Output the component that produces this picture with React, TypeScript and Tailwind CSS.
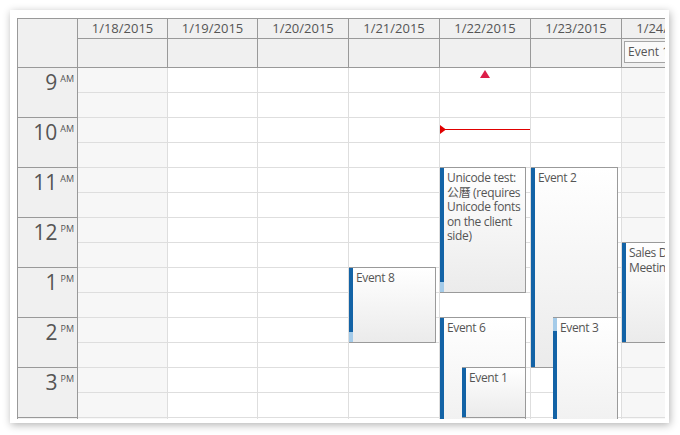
import * as React from 'react';

interface DayCol {
  label: string;
  width: string;
  weekend?: boolean;
}

interface CalEvent {
  col: number;
  text: string;
  start: number; // minutes from midnight
  end: number;
  barStart?: number;
  barEnd?: number;
  left: number;
  width: number;
}

const DAYS: DayCol[] = [
  { label: '1/18/2015', width: 'w-[90px]', weekend: true },
  { label: '1/19/2015', width: 'w-[90px]' },
  { label: '1/20/2015', width: 'w-[91px]' },
  { label: '1/21/2015', width: 'w-[91px]' },
  { label: '1/22/2015', width: 'w-[91px]' },
  { label: '1/23/2015', width: 'w-[91px]' },
  { label: '1/24/2015', width: 'w-[91px]', weekend: true },
];

const HOURS = [
  { n: '9', s: 'AM' },
  { n: '10', s: 'AM' },
  { n: '11', s: 'AM' },
  { n: '12', s: 'PM' },
  { n: '1', s: 'PM' },
  { n: '2', s: 'PM' },
  { n: '3', s: 'PM' },
];

const EVENTS: CalEvent[] = [
  { col: 3, text: 'Event 8', start: 780, end: 870, barEnd: 855, left: 0, width: 87 },
  { col: 4, text: 'Unicode test: 公曆 (requires Unicode fonts on the client side)', start: 660, end: 810, barEnd: 795, left: 0, width: 86 },
  { col: 4, text: 'Event 6', start: 840, end: 1020, left: 0, width: 86 },
  { col: 4, text: 'Event 1', start: 900, end: 960, left: 22, width: 64 },
  { col: 5, text: 'Event 2', start: 660, end: 900, left: 0, width: 87 },
  { col: 5, text: 'Event 3', start: 840, end: 1020, barStart: 855, left: 22, width: 65 },
  { col: 6, text: 'Sales Dept. Meeting', start: 750, end: 870, left: 0, width: 86 },
];

const DAY_START = 540;
const px = (min: number) => ((min - DAY_START) * 5) / 6;

const EventBox: React.FC<{ ev: CalEvent }> = ({ ev }) => {
  const top = px(ev.start) - 1;
  const height = px(ev.end) - px(ev.start) + 1;
  const bs = ev.barStart ?? ev.start;
  const be = ev.barEnd ?? ev.end;
  const barTop = px(bs) - px(ev.start);
  const barHeight = px(be) - px(bs) + 1;
  return (
    <div
      className="absolute z-10 overflow-hidden border-y border-r border-[#9a9a9a] bg-linear-to-b from-white to-[#ebebeb]"
      style={{ top, height, left: ev.left, width: ev.width }}
    >
      <div className="absolute left-0 top-0 bottom-0 w-[4px] bg-[#a4cbe9]">
        <div className="absolute left-0 w-[4px] bg-[#1363a6]" style={{ top: barTop, height: barHeight }} />
      </div>
      <div className="pl-[7px] pt-[3px] text-[12px] leading-[14.5px] tracking-[-0.35px] text-[#555]">{ev.text}</div>
    </div>
  );
};

export default function App() {
  return (
    <div className="min-h-screen bg-white pl-[10px] pt-[10px] font-['Open_Sans','Noto_Sans_CJK_SC',sans-serif]">
      <div className="h-[413px] w-[659px] bg-white pl-[7px] pt-[8px] shadow-[1px_2px_8px_rgba(0,0,0,0.3)]">
        <div className="flex h-[401px] w-[648px] overflow-hidden border-l border-t border-[#999]">
          {/* row header */}
          <div className="flex w-[60px] shrink-0 flex-col">
            <div className="h-[49px] shrink-0 border-b border-r border-[#999] bg-[#f0f0f0]" />
            {HOURS.map((h) => (
              <div
                key={h.n}
                className="flex h-[50px] shrink-0 justify-end border-b border-r border-[#999] bg-[#f0f0f0] pr-[3px] pt-[1px] text-[#555]"
              >
                <span className="text-[21px] leading-[26px]">{h.n}</span>
                <span className="ml-[3px] pt-[5px] text-[9px] leading-[10px]">{h.s}</span>
              </div>
            ))}
            <div className="h-[50px] shrink-0 border-r border-[#999] bg-[#f0f0f0]" />
          </div>

          {DAYS.map((d, i) => (
            <div key={d.label} className={`${d.width} flex shrink-0 flex-col`}>
              <div className="flex h-[20px] shrink-0 items-center justify-center overflow-hidden whitespace-nowrap border-b border-r border-[#999] bg-[#f0f0f0] text-[13px] text-[#555]">
                {d.label}
              </div>
              <div className="relative h-[29px] shrink-0 border-b border-r border-[#999] bg-[#f0f0f0]">
                {i === 6 && (
                  <div className="absolute left-[2px] top-[2px] flex h-[22px] w-[86px] items-center border border-[#a5a5a5] bg-[#fafafa] pl-[3px] text-[12px] text-[#555]">
                    Event 1
                  </div>
                )}
              </div>
              <div className="relative">
                {Array.from({ length: 16 }).map((_, k) => (
                  <div
                    key={k}
                    className={`h-[25px] border-b border-r border-[#dedede] ${d.weekend ? 'bg-[#f7f7f7]' : 'bg-white'}`}
                  />
                ))}

                {i === 4 && (
                  <>
                    <svg className="absolute left-[40px] top-[2px] z-20" width="10" height="8" viewBox="0 0 10 8">
                      <polygon points="5,0 10,8 0,8" fill="#dc1e48" />
                    </svg>
                    <div className="absolute left-0 top-[61px] z-20 h-px w-[90px] bg-[#e00000]" />
                    <svg className="absolute left-0 top-[57px] z-20" width="6" height="9" viewBox="0 0 6 9">
                      <polygon points="0,0 6,4.5 0,9" fill="#e00000" />
                    </svg>
                  </>
                )}

                {EVENTS.filter((e) => e.col === i).map((ev) => (
                  <EventBox key={ev.text} ev={ev} />
                ))}
              </div>
            </div>
          ))}
        </div>
      </div>
    </div>
  );
}
